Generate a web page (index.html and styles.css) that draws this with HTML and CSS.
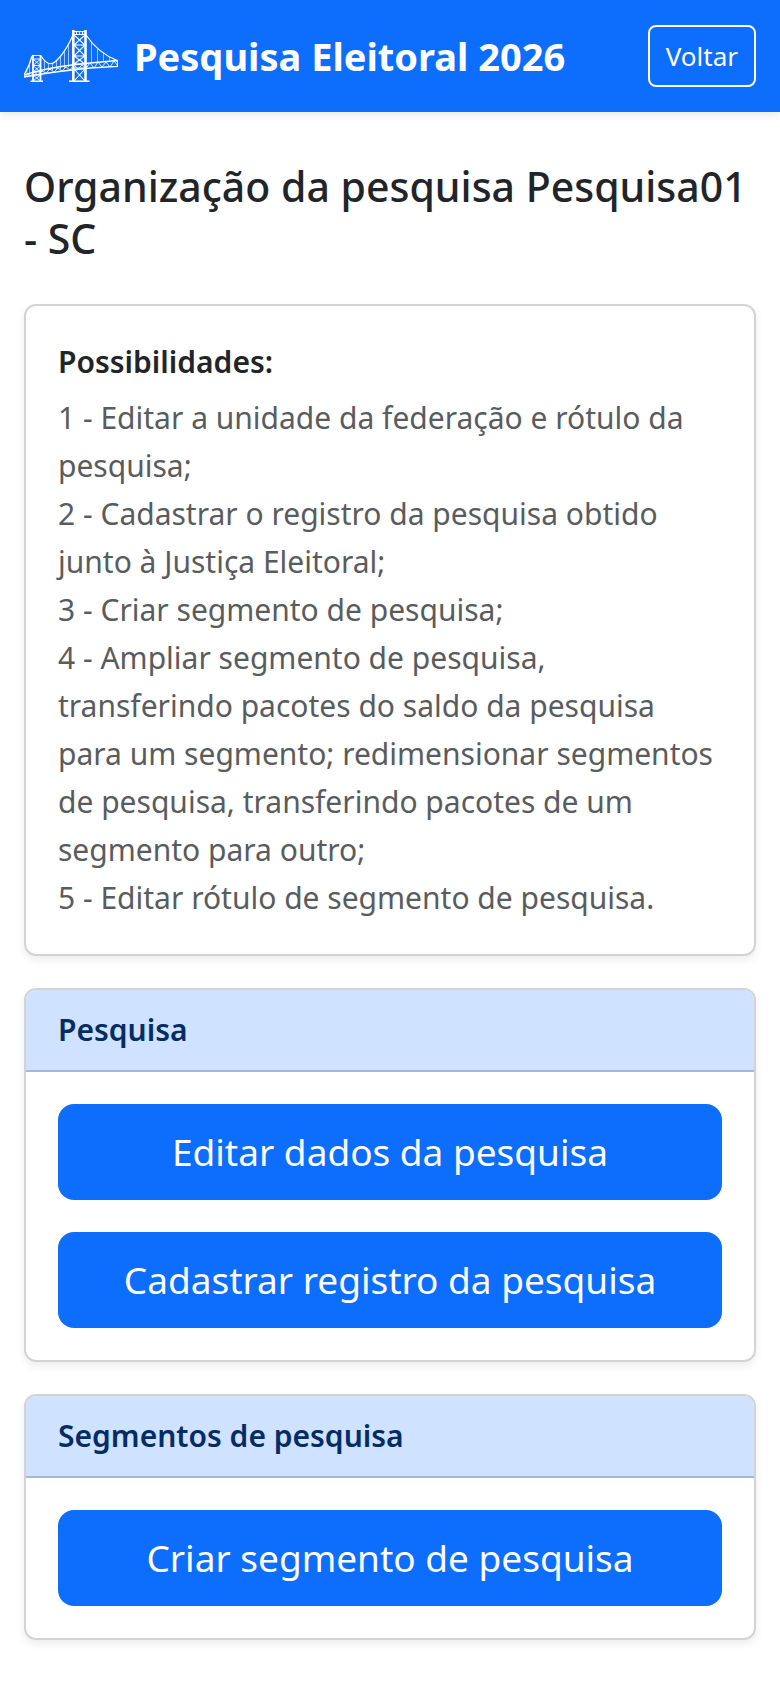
FILE: index.html
```
<!DOCTYPE html>
<html lang="pt-br">
<head>
    <meta charset="UTF-8">
    <meta name="viewport" content="width=device-width, initial-scale=1.0">
    <title>Pesquisa Eleitoral 2026</title>
    <link rel="stylesheet" href="styles.css">
</head>
<body>
    <header class="navbar">
        <div class="brand">
            <svg class="logo" viewBox="0 0 94 52" fill="none" stroke="#fff" aria-hidden="true">
                <!-- cables -->
                <path stroke-width="1.2" d="M0 45Q5 37 8 26M17 26C24 37 29 35 35 28Q43 19 49 5M62 5Q74 23 94 31"/>
                <!-- hangers -->
                <path stroke-width="0.8" opacity="0.75" d="M3 41v3M5.5 35v9M20.5 31v10M24.5 34v7M28.5 33v7M32.5 31v8M36.5 27v12M40.5 22v16M44.5 15v22M67.5 12v21M73.5 18v14M79.5 23v9M85.5 27v4"/>
                <!-- deck -->
                <path stroke-width="1.3" d="M0 45Q22 38 48 35L66 33L93.5 30.5V36.5L66 38L48 40Q22 43 0 47Z"/>
                <path stroke-width="0.9" d="M0 47L4 44L7 46L10 42L14 45L18 41L22 43L26 39L30 42L34 38L38 41L42 37L46 40L50 35L54 39L58 35L62 38L66 33L70 38L74 32L78 37L82 32L86 37L90 31L94 36"/>
                <!-- small tower -->
                <path stroke-width="1.8" d="M9 25V51M16.5 25V51M6.5 51.3H19"/>
                <path stroke-width="0.9" d="M8 25.5H17M9 29H16.5M9 35.5H16.5M9 42H16.5M9 45H16.5M9 29L16.5 35.5L9 42M16.5 29L9 35.5L16.5 42M9 45L16.5 51M16.5 45L9 51"/>
                <!-- big tower -->
                <path stroke-width="2.6" d="M49.3 0V51M61.5 0V51"/>
                <path stroke-width="1.6" d="M45 51.2H65.5"/>
                <path stroke-width="1.1" d="M49 1.5H62M49 4.5H62M49 15H62M49 26H62M49 34H62M49 38H62M52.5 1.5v3M55.5 1.5v3M58.5 1.5v3M50 5L61 15L50 26L61 34M61 5L50 15L61 26L50 34M50 39L61 51M61 39L50 51"/>
            </svg>
            <span class="title">Pesquisa Eleitoral 2026</span>
        </div>
        <button class="back" type="button">Voltar</button>
    </header>

    <main class="container">
        <h1>Organização da pesquisa Pesquisa01 - SC</h1>

        <section class="card">
            <div class="card-body">
                <h2 class="card-title">Possibilidades:</h2>
                <p class="card-text">
                    1 - Editar a unidade da federação e rótulo da pesquisa;<br>
                    2 - Cadastrar o registro da pesquisa obtido junto à Justiça Eleitoral;<br>
                    3 - Criar segmento de pesquisa;<br>
                    4 - Ampliar segmento de pesquisa, transferindo pacotes do saldo da pesquisa para um segmento; redimensionar segmentos de pesquisa, transferindo pacotes de um segmento para outro;<br>
                    5 - Editar rótulo de segmento de pesquisa.
                </p>
            </div>
        </section>

        <section class="card">
            <h2 class="card-header">Pesquisa</h2>
            <div class="card-body">
                <button class="btn" type="button">Editar dados da pesquisa</button>
                <button class="btn" type="button">Cadastrar registro da pesquisa</button>
            </div>
        </section>

        <section class="card">
            <h2 class="card-header">Segmentos de pesquisa</h2>
            <div class="card-body">
                <button class="btn" type="button">Criar segmento de pesquisa</button>
            </div>
        </section>
    </main>
</body>
</html>
```
FILE: styles.css
```
*{
    box-sizing: border-box;
    margin: 0;
}
body{
    font-family: "Segoe UI", "Noto Sans", "Open Sans", sans-serif;
    font-size: 30px;
    line-height: 48px;
    color: #212529;
    background-color: #fff;
}
button{
    font-family: inherit;
    color: #fff;
    cursor: pointer;
}
.navbar{
    display: flex;
    align-items: center;
    justify-content: space-between;
    min-height: 112px;
    padding: 0 24px;
    background-color: #0d6efd;
    box-shadow: 0 4px 8px rgba(0, 0, 0, 0.075);
}
.brand{
    display: flex;
    align-items: center;
    gap: 16px;
}
.logo{
    width: 94px;
    height: 52px;
}
.title{
    color: #fff;
    font-size: 38px;
    font-weight: 700;
}
.back{
    padding: 8px 16px;
    font-size: 26px;
    line-height: 42px;
    background-color: transparent;
    border: 2px solid #f8f9fa;
    border-radius: 8px;
}
.container{
    display: flex;
    flex-direction: column;
    gap: 32px;
    padding: 48px 24px;
}
h1{
    font-size: 41px;
    font-weight: 500;
    line-height: 52px;
    margin-bottom: 8px;
}
.card{
    border: 2px solid #d2d3d4;
    border-radius: 12px;
    overflow: hidden;
    box-shadow: 0 4px 8px rgba(0, 0, 0, 0.075);
}
.card-body{
    display: flex;
    flex-direction: column;
    gap: 32px;
    padding: 32px;
}
.card-title{
    font-size: 30px;
    font-weight: 600;
    margin-bottom: -24px;
}
.card-text{
    color: #595c5f;
}
.card-header{
    padding: 16px 32px;
    font-size: 30px;
    font-weight: 600;
    color: #052c65;
    background-color: #cfe2ff;
    border-bottom: 2px solid #a7b8d6;
}
.btn{
    width: 100%;
    padding: 16px;
    font-size: 37px;
    line-height: 64px;
    background-color: #0d6efd;
    border: none;
    border-radius: 16px;
}
.btn:hover{
    background-color: #0b5ed7;
}
```
